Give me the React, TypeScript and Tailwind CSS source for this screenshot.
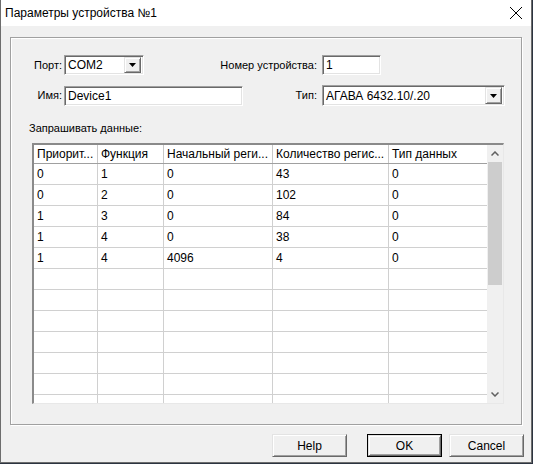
import React from "react"

const sunken =
    "border border-t-[#a0a0a0] border-l-[#a0a0a0] border-r-white border-b-white shadow-[inset_1px_1px_0_#696969,inset_-1px_-1px_0_#e3e3e3] bg-white"
const raised =
    "border border-t-[#e3e3e3] border-l-[#e3e3e3] border-r-[#696969] border-b-[#696969] shadow-[inset_1px_1px_0_#fff,inset_-1px_-1px_0_#a0a0a0] bg-[#f0f0f0]"

const rows = [
    ["0", "1", "0", "43", "0"],
    ["0", "2", "0", "102", "0"],
    ["1", "3", "0", "84", "0"],
    ["1", "4", "0", "38", "0"],
    ["1", "4", "4096", "4", "0"],
    ["", "", "", "", ""],
    ["", "", "", "", ""],
    ["", "", "", "", ""],
    ["", "", "", "", ""],
    ["", "", "", "", ""],
    ["", "", "", "", ""],
    ["", "", "", "", ""],
]

const cols = ["w-[64px]", "w-[66px]", "w-[109px]", "w-[116px]", "w-[98px]"]
const headers = ["Приорит...", "Функция", "Начальный реги...", "Количество регис...", "Тип данных"]

function DropButton({ h = "h-[16px]" }: { h?: string }) {
    return (
        <div className={`${raised} w-[17px] ${h} flex items-center justify-center shrink-0`}>
            <svg width="7" height="4" viewBox="0 0 7 4">
                <path d="M0 0H7L3.5 4Z" fill="#000" />
            </svg>
        </div>
    )
}

function Button({ label, primary }: { label: string; primary?: boolean }) {
    return (
        <div className={`w-[75px] h-[23px] ${primary ? "border border-black" : ""}`}>
            <div className={`${raised} w-full h-full flex items-center justify-center text-[12px] text-black`}>{label}</div>
        </div>
    )
}

export default function App() {
    return (
        <div
            className="w-[533px] h-[464px] bg-[#2c3440] overflow-hidden"
            style={{ fontFamily: '"Liberation Sans", Arial, sans-serif' }}
        >
            <div className="w-[532px] h-[463px] flex flex-col bg-[#f0f0f0] border-l border-r border-b border-[#6d6d6d]">
                <div className="h-[26px] bg-white flex items-center justify-between pl-[4px] pr-[8px] shrink-0">
                    <span className="text-[12px] text-black">Параметры устройства №1</span>
                    <svg width="14" height="14" viewBox="0 0 14 14">
                        <path d="M1 1L13 13M13 1L1 13" stroke="#000" strokeWidth="1" />
                    </svg>
                </div>

                <div className="flex flex-col pl-[9px] pt-[11px]">
                    <div className="w-[512px] h-[388px] border border-[#a0a0a0] shadow-[inset_1px_1px_0_#fff,1px_1px_0_#fff] text-[11px] text-black">
                        <div className="flex items-center h-[20px] mt-[17px]">
                            <span className="w-[53px] text-right pr-[2px]">Порт:</span>
                            <div className={`${sunken} w-[80px] h-[20px] flex items-center justify-between pl-[3px] pr-[2px]`}>
                                <span className="text-[12px]">COM2</span>
                                <DropButton />
                            </div>
                            <span className="w-[178px] text-right pr-[5px]">Номер устройства:</span>
                            <div className={`${sunken} w-[59px] h-[20px] flex items-center pl-[3px]`}>
                                <span className="text-[12px]">1</span>
                            </div>
                        </div>
                        <div className="flex items-center h-[21px] mt-[10px]">
                            <span className="w-[53px] text-right pr-[2px]">Имя:</span>
                            <div className={`${sunken} w-[179px] h-[20px] flex items-center pl-[3px]`}>
                                <span className="text-[12px]">Device1</span>
                            </div>
                            <span className="w-[79px] text-right pr-[5px]">Тип:</span>
                            <div className={`${sunken} w-[183px] h-[21px] flex items-center justify-between pl-[3px] pr-[2px]`}>
                                <span className="text-[12px]">АГАВА 6432.10/.20</span>
                                <DropButton h="h-[17px]" />
                            </div>
                        </div>
                        <div className="pl-[18px] mt-[15px] h-[14px] leading-[14px]">Запрашивать данные:</div>

                        <div className="ml-[21px] mt-[8px] w-[472px] h-[261px] border-t-2 border-l-2 border-r border-b border-t-[#8a8a8a] border-l-[#8a8a8a] border-r-[#e8e8e8] border-b-[#e8e8e8] bg-white flex overflow-hidden text-[12px]">
                            <div className="flex flex-col w-[453px]">
                                <div className="flex h-[19px] border-b border-[#a0a0a0] shrink-0">
                                    {headers.map((t, i) => (
                                        <div
                                            key={i}
                                            className={`${cols[i]} ${i < 4 ? "border-r border-[#c8c8c8]" : ""} pl-[3px] flex items-center whitespace-nowrap overflow-hidden`}
                                        >
                                            {t}
                                        </div>
                                    ))}
                                </div>
                                {rows.map((r, ri) => (
                                    <div key={ri} className="flex h-[21px] border-b border-[#d0d0d0] shrink-0">
                                        {r.map((c, ci) => (
                                            <div
                                                key={ci}
                                                className={`${cols[ci]} ${ci < 4 ? "border-r border-[#d0d0d0]" : ""} pl-[3px] flex items-center`}
                                            >
                                                {c}
                                            </div>
                                        ))}
                                    </div>
                                ))}
                            </div>
                            <div className="w-[16px] flex flex-col bg-[#f0f0f0] shrink-0">
                                <div className="h-[17px] flex items-center justify-center">
                                    <svg width="8" height="5" viewBox="0 0 8 5">
                                        <path d="M0.5 4.5L4 1L7.5 4.5" stroke="#606060" strokeWidth="1.5" fill="none" />
                                    </svg>
                                </div>
                                <div className="h-[123px] bg-[#cdcdcd] mx-[1px]" />
                                <div className="flex-1" />
                                <div className="h-[17px] flex items-center justify-center">
                                    <svg width="8" height="5" viewBox="0 0 8 5">
                                        <path d="M0.5 0.5L4 4L7.5 0.5" stroke="#606060" strokeWidth="1.5" fill="none" />
                                    </svg>
                                </div>
                            </div>
                        </div>
                    </div>

                    <div className="flex mt-[9px] pl-[262px] gap-[20px]">
                        <Button label="Help" />
                        <div className="flex gap-[7px]">
                            <Button label="OK" primary />
                            <Button label="Cancel" />
                        </div>
                    </div>
                </div>
            </div>
        </div>
    )
}
